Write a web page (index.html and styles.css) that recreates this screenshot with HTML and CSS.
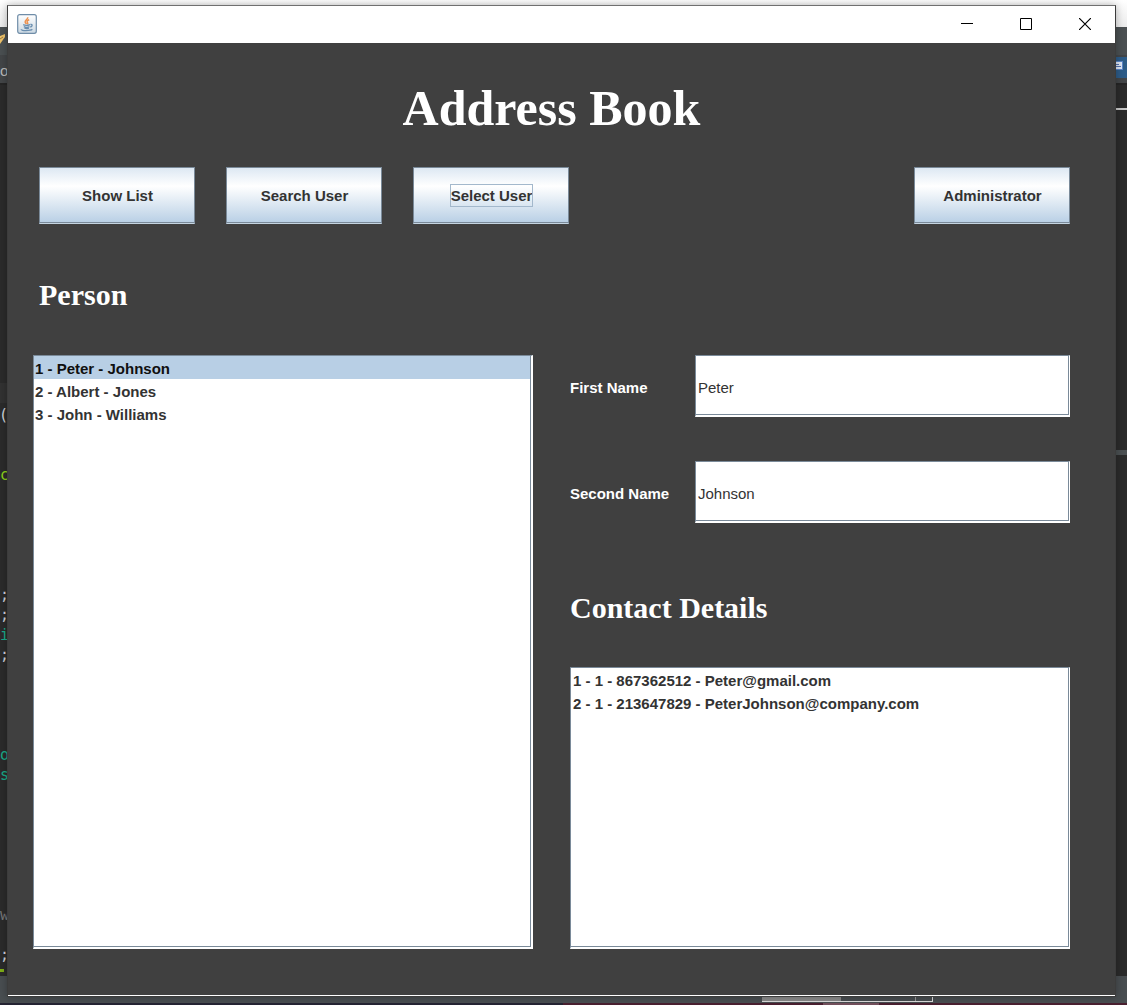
FILE: index.html
```html
<!DOCTYPE html>
<html lang="en">
<head>
<meta charset="utf-8">
<title>Address Book</title>
<link rel="stylesheet" href="styles.css">
</head>
<body>
<div class="desktop" aria-hidden="true">
  <div class="band band-top"></div>
  <div class="band band-toolbar"><svg width="8" height="20" viewBox="0 0 8 20"><path d="M0 9L5 7L5 10L0 17Z" fill="#f0c46a"/><path d="M0 12L3 10" stroke="#9b7a3f"/></svg></div>
  <div class="band band-tabs"><span>o</span><svg width="12" height="21" viewBox="0 0 12 21"><path d="M0 0H12V21H0Z" fill="#2d5c88"/><path d="M-1 4.500H7.500V12.500H-1Z" fill="#dfe7f5" stroke="#5b86c8"/><path d="M0 7.500H4M0 9.500H6" stroke="#5472ad"/></svg></div>
  <div class="band band-code">
    <div class="rule"></div>
    <div class="current-line"></div>
<pre class="code">(


<span class="lime">c</span>





;
;
<span class="teal">i</span>
;




<span class="teal">o</span>
<span class="teal">s</span>






<span class="grey">w</span>

;</pre>
    <div class="underline"></div>
    <div class="divider"></div>
  </div>
  <div class="band band-status"><div class="memory"></div></div>
  <div class="band band-edge"></div>
</div>
<div class="window">
  <header class="titlebar">
    <svg class="java" width="20" height="20" viewBox="0 0 20 20" fill="none">
      <defs><linearGradient id="g" x1="0" y1="0" x2="0" y2="1"><stop stop-color="#fff"/><stop offset="1" stop-color="#cbd8e2"/></linearGradient></defs>
      <rect x=".7" y=".7" width="18.6" height="18.6" rx="2" fill="url(#g)" stroke="#6f8da8" stroke-width="1.2"/>
      <path d="M10.7 3.2C11.3 5.400 7.400 6.200 8.200 8.200C8.400 9 9.200 9.500 9.500 10M12.200 5.800C9.800 6.800 9.600 7.600 10.600 8.700C11 9.200 10.800 9.700 10.300 10.200" stroke="#ed914e" stroke-width="1.5"/>
      <path d="M6.200 10.700C7.700 11.400 11.300 11.300 13 10.600M6.800 12.700C8.500 13.400 11 13.300 12.500 12.700M7.400 14.200C9 14.700 10.800 14.700 12 14.200M13.400 10.500C15.800 10 15.600 12.400 13.200 13M4.400 15.300C3.500 17 13.600 17 15.300 15.300" stroke="#6a8eaf" stroke-width="1.3"/>
    </svg>
    <div class="controls">
      <button type="button" aria-label="Minimize"><svg width="12" height="12"><path d="M0 5.500H12" stroke="#000"/></svg></button>
      <button type="button" aria-label="Maximize"><svg width="12" height="12"><path d="M.5 .5H11.500V11.500H.5Z" stroke="#000" fill="none"/></svg></button>
      <button type="button" aria-label="Close"><svg width="12" height="12"><path d="M0 0L12 12M12 0L0 12" stroke="#000" stroke-width="1.2"/></svg></button>
    </div>
  </header>
  <main>
    <h1>Address Book</h1>
    <nav class="actions">
      <button type="button" class="action">Show List</button>
      <button type="button" class="action">Search User</button>
      <button type="button" class="action"><span class="focused">Select User</span></button>
      <button type="button" class="action last">Administrator</button>
    </nav>
    <h2 class="person" id="person">Person</h2>
    <div class="columns">
      <select class="list" size="5" aria-labelledby="person">
        <option selected>1 - Peter - Johnson</option>
        <option>2 - Albert - Jones</option>
        <option>3 - John - Williams</option>
      </select>
      <section class="details">
        <div class="field"><label for="first">First Name</label><input id="first" type="text" value="Peter"></div>
        <div class="field"><label for="second">Second Name</label><input id="second" type="text" value="Johnson"></div>
        <h2 class="contact" id="contact">Contact Details</h2>
        <select class="list" size="5" aria-labelledby="contact">
          <option>1 - 1 - 867362512 - Peter@gmail.com</option>
          <option>2 - 1 - 213647829 - PeterJohnson@company.com</option>
        </select>
      </section>
    </div>
  </main>
</div>
</body>
</html>
```
FILE: styles.css
```css
* { box-sizing: border-box; }

body {
  margin: 0;
  min-height: 100vh;
  display: flex;
  position: relative;
  background: #2b2b2b;
  font: 15px "Liberation Sans", Arial, sans-serif;
  color: #333;
}

/* Editor visible behind the window */
.desktop {
  position: absolute;
  inset: 0;
  display: flex;
  flex-direction: column;
  overflow: hidden;
}
.band { display: flex; justify-content: space-between; flex: none; }
.band-top { height: 27px; background: linear-gradient(#fff, #ececec); }
.band-toolbar { height: 28px; background: #4b5052; }
.band-tabs {
  height: 30px;
  padding-top: 2px;
  background: #434648;
  border-bottom: 2px solid #262626;
  color: #bbb;
  line-height: 28px;
}
.band-code {
  flex: 1;
  min-height: 0;
  flex-direction: column;
  justify-content: flex-start;
  background: #2b2b2b;
}
.rule {
  flex: none;
  align-self: flex-end;
  width: 50%;
  height: 25px;
  border-bottom: 2px solid #c8c8c8;
}
.current-line { flex: none; width: 50%; margin-top: 273px; height: 20px; background: #323232; }
.code {
  margin: 0;
  padding-top: 2px;
  flex: none;
  height: 566px;
  font: 15px/20px "DejaVu Sans Mono", monospace;
  color: #d0d4dc;
  text-indent: -1px;
}
.lime { color: #8fd41c; }
.teal { color: #1aab8a; }
.grey { color: #777; }
.underline { flex: none; width: 50%; border-top: 3px dotted #7fae18; }
.divider {
  position: absolute;
  top: 450px;
  right: 0;
  width: 12px;
  height: 5px;
  background: #4b5052;
}
.band-status { height: 27px; justify-content: center; align-items: flex-end; background: #494e51; }
.memory {
  width: 171px;
  height: 6px;
  margin: 0 0 1px 567px;
  border: solid #ddd;
  border-width: 0 1px 1px 0;
  background: linear-gradient(90deg, #8c8c8c 79px, #494e51 79px 153px, #999 153px 154px, #494e51 154px);
}
.band-edge { height: 2px; background: linear-gradient(90deg, #252433 50%, #4a2030 50% 73%, #73505c 73% 78%, #4a2030 78%); }

.window {
  position: relative;
  flex: 1;
  display: flex;
  flex-direction: column;
  margin: 5px 11px 8px 7px;
  border: 1px solid #3c3c3c;
  border-top-color: #707070;
  background: #404040;
  box-shadow: 0 0 8px rgba(0, 0, 0, .3);
}
.titlebar {
  height: 37px;
  padding: 0 1px 2px 9px;
  display: flex;
  align-items: center;
  justify-content: space-between;
  background: #fff;
}
.controls { display: flex; }
.controls button {
  width: 59px;
  height: 35px;
  padding: 0;
  border: 0;
  background: none;
  display: grid;
  place-items: center;
}

main {
  flex: 1;
  display: flex;
  flex-direction: column;
  padding: 35px 45px 46px 25px;
  border-bottom: 1px solid #fff;
  color: #fff;
}
h1, h2 {
  margin: 0;
  font-family: "Liberation Serif", "Times New Roman", serif;
  font-weight: bold;
}
h1 { margin-bottom: 29px; font-size: 50px; line-height: 60px; text-align: center; }
h2 { font-size: 30px; line-height: 36px; }
.person { margin: 53px 6px 42px; }
.contact { margin: 23px 0 -3px; }

.actions { display: flex; gap: 31px; padding-left: 6px; }
.action {
  width: 156px;
  height: 57px;
  padding: 0 0 0 1px;
  border: 1px solid #7a8a99;
  border-bottom: 1px solid #c5d5e2;
  box-shadow: inset 0 -1px #7a8a99;
  background: linear-gradient(#dde8f3, #fff 33%, #b8cfe5);
  font: bold 15px "Liberation Sans", Arial, sans-serif;
  color: #333;
}
.last { margin-left: auto; }
.focused { outline: 1px solid #a3b8cc; padding: 2px 0; }

.columns { flex: 1; display: grid; grid-template-columns: 1fr 1fr; gap: 37px; }
.details { display: flex; flex-direction: column; gap: 44px; }
.field { display: grid; grid-template-columns: 1fr 3fr; align-items: center; }
label { padding-top: 2px; font-weight: bold; white-space: nowrap; }
input, .list {
  min-width: 0;
  margin: 0;
  border: solid #fff;
  border-width: 1px 1px 2px 1px;
  border-top-color: #7a8a99;
  border-left-color: #7a8a99;
  border-radius: 0;
  box-shadow: inset -1px -1px #7a8a99;
  background: #fff;
  outline: 0;
}
input {
  height: 62px;
  padding: 4px 2px 0;
  font: 15px "Liberation Sans", Arial, sans-serif;
  color: #333;
}
.list {
  flex: 1;
  padding: 0 1px 1px 0;
  overflow: hidden;
  font: bold 15px "Liberation Sans", Arial, sans-serif;
  color: #333;
}
.columns > .list { border-right-width: 2px; }
.list option { min-height: 23px; padding: 4px 2px 2px 1px; font-weight: bold; line-height: 17px; }
.details .list option { padding-left: 2px; }
.list option:checked { background: linear-gradient(#b8cfe5, #b8cfe5); }
```
